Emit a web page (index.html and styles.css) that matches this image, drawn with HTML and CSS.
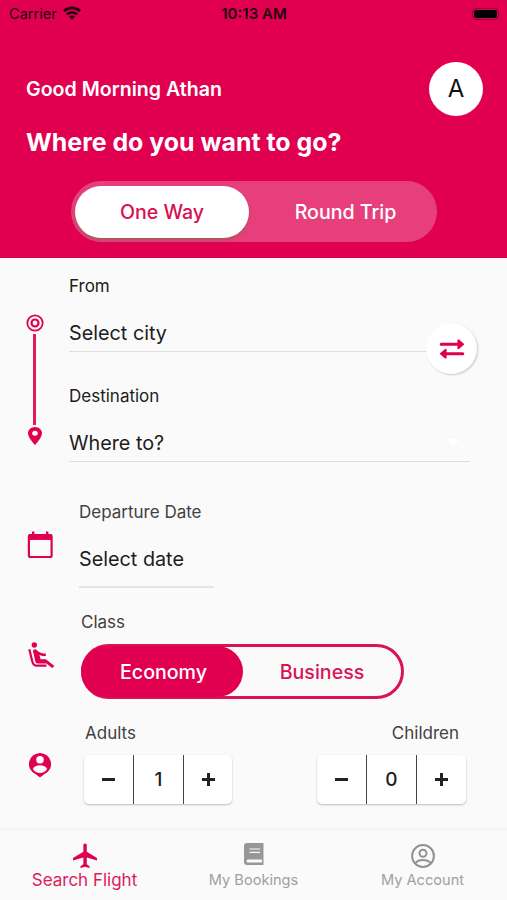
FILE: index.html
```
<!DOCTYPE html>
<html lang="en">
<head>
  <meta charset="UTF-8">
  <meta name="viewport" content="width=device-width, initial-scale=1">
  <title>Search Flight</title>
  <link rel="stylesheet" href="styles.css">
</head>
<body>
  <div class="app">
    <header class="header">
      <!-- Phone status bar -->
      <div class="status-bar">
        <div class="carrier">
          <span>Carrier</span>
          <svg class="wifi" viewBox="0 0 18 14" fill="none" stroke="#26000e" stroke-width="2.7">
            <path d="M.9 5.2a11.5 11.5 0 0 1 16.2 0M3.9 8.5a7.2 7.2 0 0 1 10.2 0"/>
            <path d="M9 13.6 6 10.7a4.2 4.2 0 0 1 6 0z" fill="#26000e" stroke="none"/>
          </svg>
        </div>
        <span class="time">10:13 AM</span>
        <div class="battery"><span class="battery-level"></span></div>
      </div>
      <div class="greeting-row">
        <span class="greeting">Good Morning Athan</span>
        <div class="avatar">A</div>
      </div>
      <h1>Where do you want to go?</h1>
      <div class="trip-toggle">
        <button class="trip active">One Way</button>
        <button class="trip">Round Trip</button>
      </div>
    </header>

    <main class="form">
      <!-- From / destination -->
      <section class="route">
        <div class="route-icons">
          <svg class="target" viewBox="0 0 18 18" fill="none" stroke="#e10050">
            <circle cx="9" cy="9" r="7.7" stroke-width="1.8"/>
            <circle cx="9" cy="9" r="3.5" stroke-width="2.2"/>
          </svg>
          <span class="route-line"></span>
          <svg class="pin" viewBox="5 2 14 20" preserveAspectRatio="none" fill="#e10050">
            <path d="M12 2C8.13 2 5 5.13 5 9c0 5.25 7 13 7 13s7-7.75 7-13c0-3.87-3.13-7-7-7zm0 9.8a2.8 2.8 0 0 1 0-5.6 2.8 2.8 0 0 1 0 5.6z"/>
          </svg>
        </div>
        <div class="route-fields">
          <div class="field">
            <label>From</label>
            <div class="value">Select city</div>
            <button class="swap" aria-label="Swap">
              <svg viewBox="0 0 26 20" fill="#e10050" stroke="#e10050" stroke-linejoin="round" stroke-linecap="round">
                <path d="M2.2 5.3h18M23.8 14.7H6" fill="none" stroke-width="3"/>
                <path d="M19.3 1.3v8l4.8-4zM6.7 10.7v8l-4.8-4z" stroke-width="1.8"/>
              </svg>
            </button>
          </div>
          <div class="field">
            <label>Destination</label>
            <div class="value">Where to?<span class="caret"></span></div>
          </div>
        </div>
      </section>

      <!-- Departure date -->
      <section class="row date-row">
        <svg class="calendar" viewBox="0 0 26 28" fill="none" stroke="#e10050">
          <rect x="1.9" y="4" width="22.7" height="22" rx="1.5" stroke-width="2.2"/>
          <path d="M1.5 6.2h23.500" stroke-width="5.500"/>
          <path d="M6.200 .5v4M20.200 .5v4" stroke-width="2.400"/>
        </svg>
        <div class="date-field">
          <label>Departure Date</label>
          <div class="value">Select date</div>
        </div>
      </section>

      <!-- Travel class -->
      <section class="row class-row">
        <svg class="seat" viewBox="0 0 27 27" fill="none" stroke="#e10050">
          <circle cx="6.3" cy="3" r="2.7" fill="#e10050" stroke="none"/>
          <path d="M1.300 7.200 4.300 19.500c.7 3 2 4.200 4.700 4.200h9.500" stroke-width="2.200"/>
          <path d="M5.100 9.300c-.4-1.800 2.300-2.700 3.600-1.200 2.400 2.800 5.500 3.700 9.100 3.300v2.600c-2.800.4-4.800-.2-6.400-1.200l1.200 4.500h4c1.300 0 2.100.4 2.900 1.100l6.900 5.500-2.200 2-5.800-4.400H9.800c-1.400 0-2.200-.7-2.500-2z" fill="#e10050" stroke="none"/>
        </svg>
        <div>
          <label>Class</label>
          <div class="class-toggle">
            <button class="cabin active">Economy</button>
            <button class="cabin">Business</button>
          </div>
        </div>
      </section>

      <!-- Passengers -->
      <section class="row passengers">
        <svg class="person-pin" viewBox="0 0 22 25">
          <path d="M11 0a11 11 0 0 0-4.2 21.2L11 24.6l4.2-3.4A11 11 0 0 0 11 0z" fill="#e10050"/>
          <circle cx="11" cy="6.8" r="3.8" fill="#fafafa"/>
          <path d="M3.800 16c2-5 12.400-5 14.400 0-3.400 5.300-11 5.300-14.400 0z" fill="#fafafa"/>
        </svg>
        <div class="counter">
          <label>Adults</label>
          <div class="stepper">
            <button class="minus" aria-label="Less"></button>
            <span class="count">1</span>
            <button class="plus" aria-label="More"></button>
          </div>
        </div>
        <div class="counter children">
          <label>Children</label>
          <div class="stepper">
            <button class="minus" aria-label="Less"></button>
            <span class="count">0</span>
            <button class="plus" aria-label="More"></button>
          </div>
        </div>
      </section>
    </main>

    <nav class="tabs">
      <a class="tab active">
        <svg class="plane" viewBox="2 2 19 20" preserveAspectRatio="none" fill="#e10050">
          <path d="M10.200 9V3.500a1.400 1.400 0 0 1 2.700 0V9l8.100 5v2l-8.100-2.500V19l2.200 1.500V22l-3.600-1-3.600 1v-1.500L10.200 19v-5.500L2 16v-2z"/>
        </svg>
        <span>Search Flight</span>
      </a>
      <a class="tab">
        <svg class="book" viewBox="0 0 20 22">
          <path d="M3 0h16.500v22H3a3 3 0 0 1-3-3V3a3 3 0 0 1 3-3z" fill="#979797"/>
          <path d="M5.500 6h10.500M5.500 9.300h10.500" stroke="#fafafa" stroke-width="1.200"/>
          <path d="M4 16.500h14v3H4a1.500 1.500 0 0 1 0-3z" fill="#fafafa"/>
        </svg>
        <span>My Bookings</span>
      </a>
      <a class="tab">
        <svg class="account" viewBox="0 0 24 24" fill="none" stroke="#929292" stroke-width="2">
          <circle cx="12" cy="12" r="10.900"/>
          <circle cx="12" cy="9.200" r="3.500"/>
          <path d="M4.500 19c3-4 12-4 15 0"/>
        </svg>
        <span>My Account</span>
      </a>
    </nav>
  </div>
</body>
</html>
```
FILE: styles.css
```
* {
  box-sizing: border-box;
}
body {
  margin: 0;
  font-family: Inter, "Liberation Sans", sans-serif;
  background-color: #fafafa;
  color: #1c1c1c;
}
button {
  font-family: inherit;
  border: none;
  background: none;
  padding: 0;
  cursor: pointer;
}
svg {
  display: block;
  flex-shrink: 0;
}
.app {
  display: flex;
  flex-direction: column;
  width: 507px;
  height: 900px;
  overflow: hidden;
}

/* Header */
.header {
  height: 258px;
  background-color: #e10050;
  color: #fff;
}
.status-bar {
  display: grid;
  grid-template-columns: 1fr auto 1fr;
  align-items: center;
  height: 27px;
  padding: 0 8px 0 9px;
  color: #26000e;
  font-size: 14.6px;
}
.carrier {
  display: flex;
  align-items: center;
  gap: 6px;
}
.wifi {
  width: 18px;
  height: 14px;
  margin-top: -2px;
}
.time {
  font-size: 15px;
  font-weight: 600;
}
.battery {
  justify-self: end;
  width: 27px;
  height: 12px;
  padding: 1px;
  border: 1px solid #9c0038;
  border-radius: 4px;
}
.battery-level {
  display: block;
  width: 23px;
  height: 8px;
  border-radius: 2px;
  background-color: #000;
}
.greeting-row {
  display: flex;
  justify-content: space-between;
  align-items: center;
  height: 54px;
  margin-top: 35px;
  padding: 0 24px 0 26px;
}
.greeting {
  font-size: 19.6px;
  font-weight: 600;
}
.avatar {
  width: 54px;
  height: 54px;
  border-radius: 50%;
  background-color: #fff;
  color: #111;
  font-size: 24px;
  line-height: 54px;
  text-align: center;
}
h1 {
  margin: 11px 0 0 26px;
  font-size: 24.9px;
  font-weight: 700;
  line-height: 30px;
}
.trip-toggle {
  display: flex;
  width: 366px;
  height: 61px;
  margin: 24px 0 0 71px;
  padding: 5px 4px 4px;
  border-radius: 31px;
  background-color: #e73f7b;
}
.trip {
  flex: 1;
  height: 52px;
  padding-left: 9px;
  border-radius: 26px;
  color: #fff;
  font-size: 19.6px;
  font-weight: 500;
}
.trip.active {
  flex: 0 0 174px;
  padding-left: 0;
  background-color: #fff;
  color: #d8104f;
  box-shadow: 0 2px 3px rgba(120, 110, 70, 0.6);
}

/* Form */
.form {
  flex: 1;
}
label {
  display: block;
  font-size: 17px;
  line-height: 20px;
}
.value {
  font-size: 19.8px;
  line-height: 24px;
}
.route {
  display: flex;
  height: 204px;
}
.route-icons {
  display: flex;
  flex-direction: column;
  align-items: center;
  width: 69px;
  padding-top: 56px;
}
.target {
  width: 18px;
  height: 18px;
}
.route-line {
  width: 3px;
  height: 91px;
  margin: 2px 0;
  background-color: #dd1a5b;
}
.pin {
  width: 14px;
  height: 18px;
}
.route-fields {
  width: 401px;
  padding-top: 18px;
}
.field {
  position: relative;
  height: 76px;
  margin-bottom: 34px;
  border-bottom: 1px solid #dedede;
}
.field .value {
  display: flex;
  justify-content: space-between;
  align-items: center;
  margin-top: 25px;
}
.caret {
  margin-right: 10px;
  border: 7px solid transparent;
  border-top: 8px solid #fff;
  border-bottom: none;
}
/* Swap button sits over the end of the first underline */
.swap {
  position: absolute;
  right: -7px;
  bottom: -23px;
  display: flex;
  justify-content: center;
  align-items: center;
  width: 51px;
  height: 51px;
  border-radius: 50%;
  background-color: #fff;
  box-shadow: 1px 1px 2px rgba(0, 0, 0, 0.2);
}
.swap svg {
  width: 26px;
  height: 20px;
}
.row {
  display: flex;
}
.row label {
  color: #414141;
}
.date-row {
  height: 150px;
  padding: 40px 0 0 27px;
}
.calendar {
  width: 26px;
  height: 28px;
  margin-top: 29px;
}
.date-field {
  width: 135px;
  height: 86px;
  margin-left: 26px;
  border-bottom: 2px solid #e4e4e4;
}
.date-field .value {
  margin-top: 25px;
}
.class-row {
  height: 111px;
  padding-left: 28px;
}
.seat {
  width: 27px;
  height: 27px;
  margin-top: 30px;
}
.class-row label {
  margin-left: 26px;
}
.class-toggle {
  display: flex;
  width: 323px;
  height: 55px;
  margin: 12px 0 0 26px;
  border: 3px solid #da1355;
  border-radius: 28px;
}
.cabin {
  flex: 1;
  color: #da1355;
  font-size: 19.6px;
  font-weight: 500;
}
.cabin.active {
  flex: 0 0 162px;
  margin: -1px 0 -1px -3px;
  padding-left: 3px;
  border-radius: 26px;
  background-color: #e10050;
  color: #fff;
}
.passengers {
  padding-left: 29px;
}
.person-pin {
  width: 22px;
  height: 25px;
  margin-top: 30px;
}
.counter {
  width: 148px;
  margin-left: 33px;
}
.counter label {
  padding-left: 1px;
}
.counter.children {
  width: 149px;
  margin-left: 85px;
}
.children label {
  padding-right: 7px;
  text-align: right;
}
.stepper {
  display: grid;
  grid-template-columns: 49px 51px 1fr;
  height: 49px;
  margin-top: 12px;
  border-radius: 5px;
  background-color: #fff;
  box-shadow: 0 1px 2px rgba(0, 0, 0, 0.25);
}
.count {
  border-left: 1px solid #444;
  border-right: 1px solid #444;
  font-size: 19px;
  font-weight: 500;
  line-height: 49px;
  text-align: center;
}
.minus,
.plus {
  background: linear-gradient(#222, #222) center / 13px 3px no-repeat;
}
.plus {
  background: linear-gradient(#222, #222) center / 13px 3px no-repeat,
    linear-gradient(#222, #222) center / 3px 13px no-repeat;
}

/* Bottom tabs */
.tabs {
  display: grid;
  grid-template-columns: repeat(3, 1fr);
  height: 71px;
  border-top: 1px solid #f3f3f3;
  background-color: #fafafa;
  box-shadow: 0 -1px 2px rgba(0, 0, 0, 0.02);
}
.tab {
  display: flex;
  flex-direction: column;
  align-items: center;
  color: #a0a0a0;
  font-size: 14.6px;
}
.tab span {
  margin-top: auto;
  margin-bottom: 10px;
  line-height: 20px;
}
.tab.active {
  color: #dc1c5b;
  font-size: 17px;
}
.plane {
  width: 24px;
  height: 25px;
  margin-top: 13px;
}
.book {
  width: 20px;
  height: 22px;
  margin-top: 13px;
}
.account {
  width: 24px;
  height: 24px;
  margin-top: 14px;
}
```
